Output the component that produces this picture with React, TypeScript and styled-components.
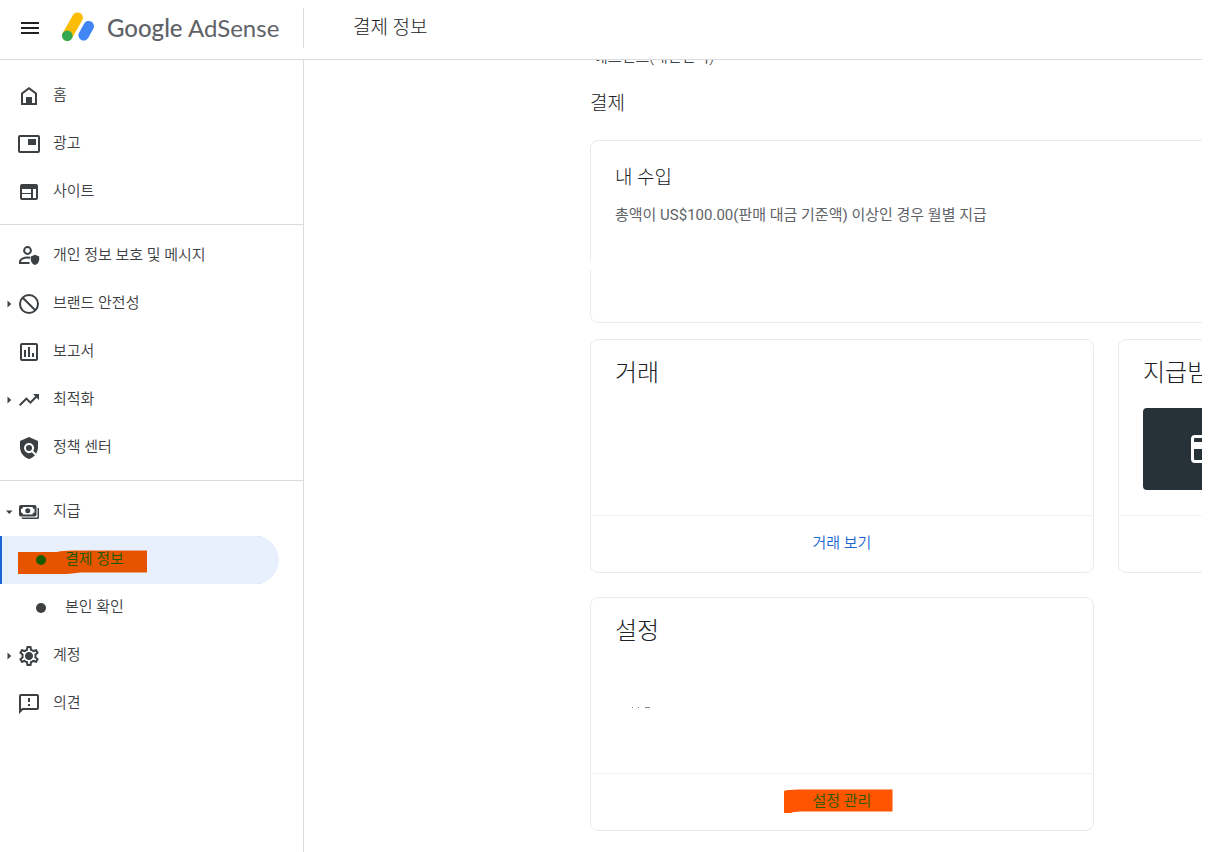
import React from "react";
import styled, { createGlobalStyle, css } from "styled-components";
import {
  MdMenu,
  MdTrendingUp,
  MdPolicy,
  MdOutlineSettings,
  MdOutlineFeedback,
  MdOutlineAssessment,
} from "react-icons/md";

const GlobalStyle = createGlobalStyle`
  *, *::before, *::after { box-sizing: border-box; }
  body {
    margin: 0;
    background: #fff;
    color: #3c4043;
    font-family: Roboto, "Noto Sans CJK KR", sans-serif;
    font-size: 15px;
    font-weight: 350;
    line-height: 20px;
  }
  button { font: inherit; color: inherit; background: none; border: 0; padding: 0; cursor: pointer; }
  a { color: inherit; text-decoration: none; }
  h1, h2, h3, p, ul { margin: 0; padding: 0; font-weight: inherit; list-style: none; }
  h1, h2, h3 { font-weight: 300; }
  svg { display: block; flex: none; }
`;

const Shell = styled.div`
  display: flex;
  flex-direction: column;
  height: 100vh;
  padding-right: 6px;
  overflow: hidden;
`;

const Header = styled.header`
  display: flex;
  align-items: flex-start;
  flex: none;
  height: 60px;
  padding-top: 8px;
  border-bottom: 1px solid #dadce0;
`;

const Brand = styled.div`
  display: flex;
  align-items: center;
  width: 304px;
  height: 40px;
  padding-left: 18px;
  border-right: 1px solid #dadce0;
`;

const MenuButton = styled.button`
  color: #202124;
`;

const LogoLink = styled.a`
  display: flex;
  align-items: center;
  gap: 12px;
  margin-left: 19px;
  color: #5f6368;
  font-family: Lato, sans-serif;
  font-size: 24px;
  font-weight: 400;
  line-height: 40px;
  white-space: nowrap;
`;

const LogoStrong = styled.span`
  font-weight: 500;
`;

const PageTitle = styled.h1`
  margin-left: 49px;
  color: #202124;
  font-size: 19px;
  line-height: 40px;
`;

const Body = styled.div`
  display: flex;
  flex: 1;
  min-height: 0;
`;

const Sidebar = styled.nav`
  flex: none;
  width: 304px;
  padding-top: 12px;
  border-right: 1px solid #dadce0;
`;

const NavGroup = styled.ul`
  & + & {
    margin-top: 8px;
    padding-top: 7px;
    border-top: 1px solid #dadce0;
  }
`;

const NavLink = styled.a<{ $active?: boolean }>`
  position: relative;
  display: flex;
  align-items: center;
  height: 48px;
  margin-right: 24px;
  ${(p) =>
    p.$active &&
    css`
      background: #e8f0fe;
      border-radius: 0 24px 24px 0;
      box-shadow: inset 2px 0 #1967d2;
      color: #1b5a00;
    `}
`;

const Expander = styled.span`
  display: flex;
  justify-content: center;
  flex: none;
  width: 17px;
`;

const NavIcon = styled.span`
  position: relative;
  flex: none;
  width: 24px;
  height: 24px;
`;

const NavLabel = styled.span`
  position: relative;
  margin-left: 12px;
  padding-bottom: 2px;
  white-space: nowrap;
`;

const Bullet = styled.span`
  position: relative;
  flex: none;
  width: 10px;
  height: 10px;
  margin-left: 36px;
  border-radius: 50%;
  background: currentColor;
  & + ${NavLabel} { margin-left: 19px; }
`;

const NavMarker = styled.svg`
  position: absolute;
  left: 18px;
  top: 14px;
`;

const Main = styled.main`
  flex: 1;
  min-width: 0;
  overflow: hidden;
  padding-left: 286px;
`;

const AccountName = styled.p`
  margin-top: -13px;
  padding-left: 4px;
`;

const SectionTitle = styled.h2`
  margin-top: 23px;
  color: #202124;
  font-size: 19px;
  line-height: 28px;
`;

const Grid = styled.div`
  display: grid;
  grid-template-columns: repeat(2, minmax(504px, 1fr));
  column-gap: 24px;
  margin-top: 22px;
`;

const Card = styled.section<{ $wide?: boolean }>`
  position: relative;
  display: flex;
  flex-direction: column;
  height: 234px;
  margin-bottom: 24px;
  border: 1px solid #e8eaed;
  border-radius: 8px;
  ${(p) =>
    p.$wide &&
    css`
      grid-column: 1 / -1;
      height: 183px;
      margin-bottom: 16px;
      padding: 23px 24px;
    `}
`;

const BorderGap = styled.span`
  position: absolute;
  left: -1px;
  top: 120px;
  width: 4px;
  height: 9px;
  background: #fff;
`;

const EarningsTitle = styled.h3`
  color: #202124;
  font-size: 19px;
  line-height: 28px;
`;

const EarningsNote = styled.p`
  margin-top: 13px;
  color: #5f6368;
  font-weight: 400;
`;

const CardBody = styled.div`
  flex: 1;
  padding: 17px 24px;
`;

const CardTitle = styled.h3`
  color: #202124;
  font-size: 24px;
  line-height: 32px;
`;

const CardFooter = styled.footer`
  display: flex;
  justify-content: center;
  align-items: center;
  height: 57px;
  padding-bottom: 3px;
  border-top: 1px solid #f1f3f4;
`;

const ActionButton = styled.button<{ $marked?: boolean }>`
  position: relative;
  color: ${(p) => (p.$marked ? "#2b5a00" : "#1967d2")};
`;

const ActionLabel = styled.span`
  position: relative;
`;

const ActionMarker = styled.svg`
  position: absolute;
  left: -29px;
  top: -2px;
`;

const MethodTile = styled.div`
  display: flex;
  align-items: center;
  justify-content: center;
  width: 128px;
  height: 82px;
  margin-top: 19px;
  border-radius: 4px;
  background: #263238;
`;

const TextTrace = styled.svg`
  margin: 60px 0 0 16px;
`;

type IconProps = { children: React.ReactNode };
const Icon = ({ children }: IconProps) => (
  <svg width="24" height="24" viewBox="0 0 24 24" fill="currentColor" aria-hidden="true">
    {children}
  </svg>
);

const HomeIcon = () => (
  <Icon>
    <path fillRule="evenodd" d="M4 21V9l8-6 8 6v12zM6 19h3v-6h6v6h3v-9l-6-4.5L6 10z" />
  </Icon>
);
const AdsIcon = () => (
  <Icon>
    <path
      fillRule="evenodd"
      d="M3 3h18a2 2 0 0 1 2 2v14a2 2 0 0 1-2 2H3a2 2 0 0 1-2-2V5a2 2 0 0 1 2-2zM3 5v14h18V5z"
    />
    <path d="M11 7h8v6h-8z" />
  </Icon>
);
const SitesIcon = () => (
  <Icon>
    <path
      fillRule="evenodd"
      d="M5 4h14a2 2 0 0 1 2 2v12a2 2 0 0 1-2 2H5a2 2 0 0 1-2-2V6a2 2 0 0 1 2-2zM5 9v4h9V9zM5 14v4h9v-4zM16 9v9h3V9z"
    />
  </Icon>
);
const PrivacyIcon = () => (
  <Icon>
    <circle cx="10.500" cy="6.500" r="3.400" fill="none" stroke="currentColor" strokeWidth="2" />
    <path
      d="M12.500 19H3v-1.600c0-2.200 4-3.900 7.500-3.900 1 0 1.800.1 2.700.3"
      fill="none"
      stroke="currentColor"
      strokeWidth="2"
    />
    <path d="M18 10.800l4.200 1.700v3c0 2.600-1.700 4.600-4.200 5.500-2.500-.9-4.200-2.900-4.200-5.500v-3z" />
  </Icon>
);
const BlockIcon = () => (
  <Icon>
    <g fill="none" stroke="currentColor" strokeWidth="2">
      <circle cx="12" cy="12" r="9" />
      <path d="M5.500 5.500l13 13" />
    </g>
  </Icon>
);
const PaymentsIcon = () => (
  <Icon>
    <path
      fillRule="evenodd"
      d="M4 5h13.500a2 2 0 0 1 2 2v7.500a2 2 0 0 1-2 2H4a2 2 0 0 1-2-2V7a2 2 0 0 1 2-2zM6 7a2 2 0 0 1-2 2v3.500a2 2 0 0 1 2 2h9.500a2 2 0 0 1 2-2V9a2 2 0 0 1-2-2z"
    />
    <circle cx="10.750" cy="10.750" r="2.500" />
    <path d="M20.500 8H22v9.500a1.500 1.500 0 0 1-1.500 1.500H6a1.500 1.500 0 0 1-1.500-1.500h16z" />
  </Icon>
);
const GearIcon = () => (
  <Icon>
    <MdOutlineSettings size={24} />
    <circle cx="12" cy="12" r="3.500" />
  </Icon>
);

const Arrow = ({ open }: { open?: boolean }) => (
  <svg width="8" height="8" viewBox="0 0 8 8" fill="#3c4043" aria-hidden="true">
    <path d={open ? "M1 2.500h6.500L4.250 6z" : "M2.500.500v7L6.200 4z"} />
  </svg>
);

const LogoMark = () => (
  <svg width="34" height="34" viewBox="61 10 34 34" fill="none" strokeLinecap="round" aria-hidden="true">
    <path d="M77.600 16.700L67.300 34.600" stroke="#fbbc04" strokeWidth="10.600" />
    <path d="M88.700 25.200L83.700 34.300" stroke="#4285f4" strokeWidth="10.600" />
    <circle cx="67.300" cy="34.700" r="5.300" fill="#34a853" />
  </svg>
);

type Item = { label: string; icon: React.ReactNode; arrow?: "open" | "closed" };

const primary: Item[] = [
  { label: "홈", icon: <HomeIcon /> },
  { label: "광고", icon: <AdsIcon /> },
  { label: "사이트", icon: <SitesIcon /> },
];
const tools: Item[] = [
  { label: "개인 정보 보호 및 메시지", icon: <PrivacyIcon /> },
  { label: "브랜드 안전성", icon: <BlockIcon />, arrow: "closed" },
  { label: "보고서", icon: <MdOutlineAssessment size={24} /> },
  { label: "최적화", icon: <MdTrendingUp size={24} />, arrow: "closed" },
  { label: "정책 센터", icon: <MdPolicy size={24} /> },
];

const NavItem = ({ label, icon, arrow }: Item) => (
  <li>
    <NavLink href="#">
      <Expander>{arrow && <Arrow open={arrow === "open"} />}</Expander>
      <NavIcon>{icon}</NavIcon>
      <NavLabel>{label}</NavLabel>
    </NavLink>
  </li>
);

export default function App() {
  return (
    <Shell>
      <GlobalStyle />
      <Header>
        <Brand>
          <MenuButton aria-label="메뉴">
            <MdMenu size={24} />
          </MenuButton>
          <LogoLink href="#">
            <LogoMark />
            <span>
              <LogoStrong>Google</LogoStrong> AdSense
            </span>
          </LogoLink>
        </Brand>
        <PageTitle>결제 정보</PageTitle>
      </Header>
      <Body>
        <Sidebar>
          <NavGroup>
            {primary.map((item) => (
              <NavItem key={item.label} {...item} />
            ))}
          </NavGroup>
          <NavGroup>
            {tools.map((item) => (
              <NavItem key={item.label} {...item} />
            ))}
          </NavGroup>
          <NavGroup>
            <NavItem label="지급" icon={<PaymentsIcon />} arrow="open" />
            <li>
              <NavLink href="#" $active aria-current="page">
                <NavMarker width="129" height="24" viewBox="0 0 129 24" fill="#e65400" aria-hidden="true">
                  <path d="M0 2h39q6-1.500 15-1.500h75v22H66c-8 0-12 1.500-20 1.500H0z" />
                </NavMarker>
                <Bullet />
                <NavLabel>결제 정보</NavLabel>
              </NavLink>
            </li>
            <li>
              <NavLink href="#">
                <Bullet />
                <NavLabel>본인 확인</NavLabel>
              </NavLink>
            </li>
            <NavItem label="계정" icon={<GearIcon />} arrow="closed" />
            <NavItem label="의견" icon={<MdOutlineFeedback size={24} />} />
          </NavGroup>
        </Sidebar>
        <Main>
          <AccountName>애드센스(대한민국)</AccountName>
          <SectionTitle>결제</SectionTitle>
          <Grid>
            <Card $wide>
              <BorderGap />
              <EarningsTitle>내 수입</EarningsTitle>
              <EarningsNote>총액이 US$100.00(판매 대금 기준액) 이상인 경우 월별 지급</EarningsNote>
            </Card>
            <Card>
              <CardBody>
                <CardTitle>거래</CardTitle>
              </CardBody>
              <CardFooter>
                <ActionButton>거래 보기</ActionButton>
              </CardFooter>
            </Card>
            <Card>
              <CardBody>
                <CardTitle>지급받는 방법</CardTitle>
                <MethodTile>
                  <svg width="32" height="28" viewBox="0 0 32 28" aria-hidden="true">
                    <rect x="1.500" y="1.500" width="29" height="25" rx="2.500" fill="none" stroke="#fff" strokeWidth="3" />
                    <path d="M2 7h28v7H2z" fill="#fff" />
                  </svg>
                </MethodTile>
              </CardBody>
              <CardFooter />
            </Card>
            <Card>
              <CardBody>
                <CardTitle>설정</CardTitle>
                <TextTrace width="24" height="2" viewBox="0 0 24 2" fill="#80868b" aria-hidden="true">
                  <path d="M1 0h1v1H1zM7 0h1v1H7zM14 0h5v1h-5z" />
                </TextTrace>
              </CardBody>
              <CardFooter>
                <ActionButton $marked>
                  <ActionMarker width="109" height="24" viewBox="0 0 109 24" fill="#ff5500" aria-hidden="true">
                    <path d="M0 2q4-1.500 14-1.500h94.500v22H16q-6 0-9 1.500H0z" />
                  </ActionMarker>
                  <ActionLabel>설정 관리</ActionLabel>
                </ActionButton>
              </CardFooter>
            </Card>
          </Grid>
        </Main>
      </Body>
    </Shell>
  );
}
